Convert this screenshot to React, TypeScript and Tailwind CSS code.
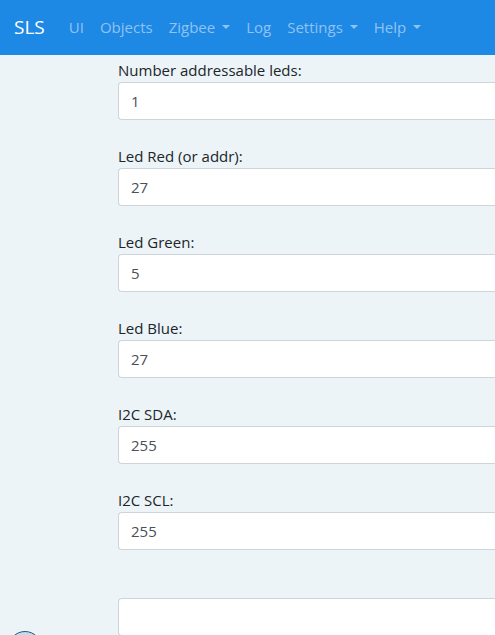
const links = [
  { label: 'UI' },
  { label: 'Objects' },
  { label: 'Zigbee', menu: true },
  { label: 'Log' },
  { label: 'Settings', menu: true },
  { label: 'Help', menu: true },
];

const fields = [
  { id: 'led-count', label: 'Number addressable leds:', value: '1' },
  { id: 'led-red', label: 'Led Red (or addr):', value: '27' },
  { id: 'led-green', label: 'Led Green:', value: '5' },
  { id: 'led-blue', label: 'Led Blue:', value: '27' },
  { id: 'i2c-sda', label: 'I2C SDA:', value: '255' },
  { id: 'i2c-scl', label: 'I2C SCL:', value: '255' },
  { id: 'extra', label: '', value: '' },
];

function NavBar() {
  return (
    <nav className="flex h-[55px] shrink-0 items-center bg-[#1e88e5] pb-0.5 pl-3.5">
      <a href="#" className="mr-4 text-[19px] leading-8 text-white">
        SLS
      </a>
      <ul className="flex">
        {links.map((link) => (
          <li key={link.label}>
            {link.menu ? (
              <button type="button" className="flex items-center gap-[7px] px-2 leading-6 text-[#8ec3f2]">
                {link.label}
                <span className="border-x-4 border-t-4 border-x-transparent border-t-[#8ec3f2]" />
              </button>
            ) : (
              <a href="#" className="block px-2 leading-6 text-[#8ec3f2]">
                {link.label}
              </a>
            )}
          </li>
        ))}
      </ul>
    </nav>
  );
}

export default function App() {
  return (
    <div className="relative flex h-screen flex-col overflow-hidden bg-[#ecf4f8] font-['Open_Sans','Noto_Sans',sans-serif] text-[15px] text-[#212529]">
      <NavBar />
      <form className="flex flex-col gap-6 pt-[3px] pl-[118px]">
        {fields.map((field) => (
          <div key={field.id}>
            <label htmlFor={field.id} className="block h-6 leading-6">
              {field.label}
            </label>
            <input
              id={field.id}
              type="text"
              defaultValue={field.value}
              aria-label={field.label || 'Value'}
              className="block h-[38px] w-full rounded-l border border-r-0 border-[#ced4da] bg-white px-3 text-[#495057] outline-none"
            />
          </div>
        ))}
      </form>
      <button
        type="button"
        aria-label="Open panel"
        className="absolute -bottom-[30px] left-2 size-[34px] rounded-full border border-[#245a8c] bg-[#c3d9ec]"
      />
    </div>
  );
}
